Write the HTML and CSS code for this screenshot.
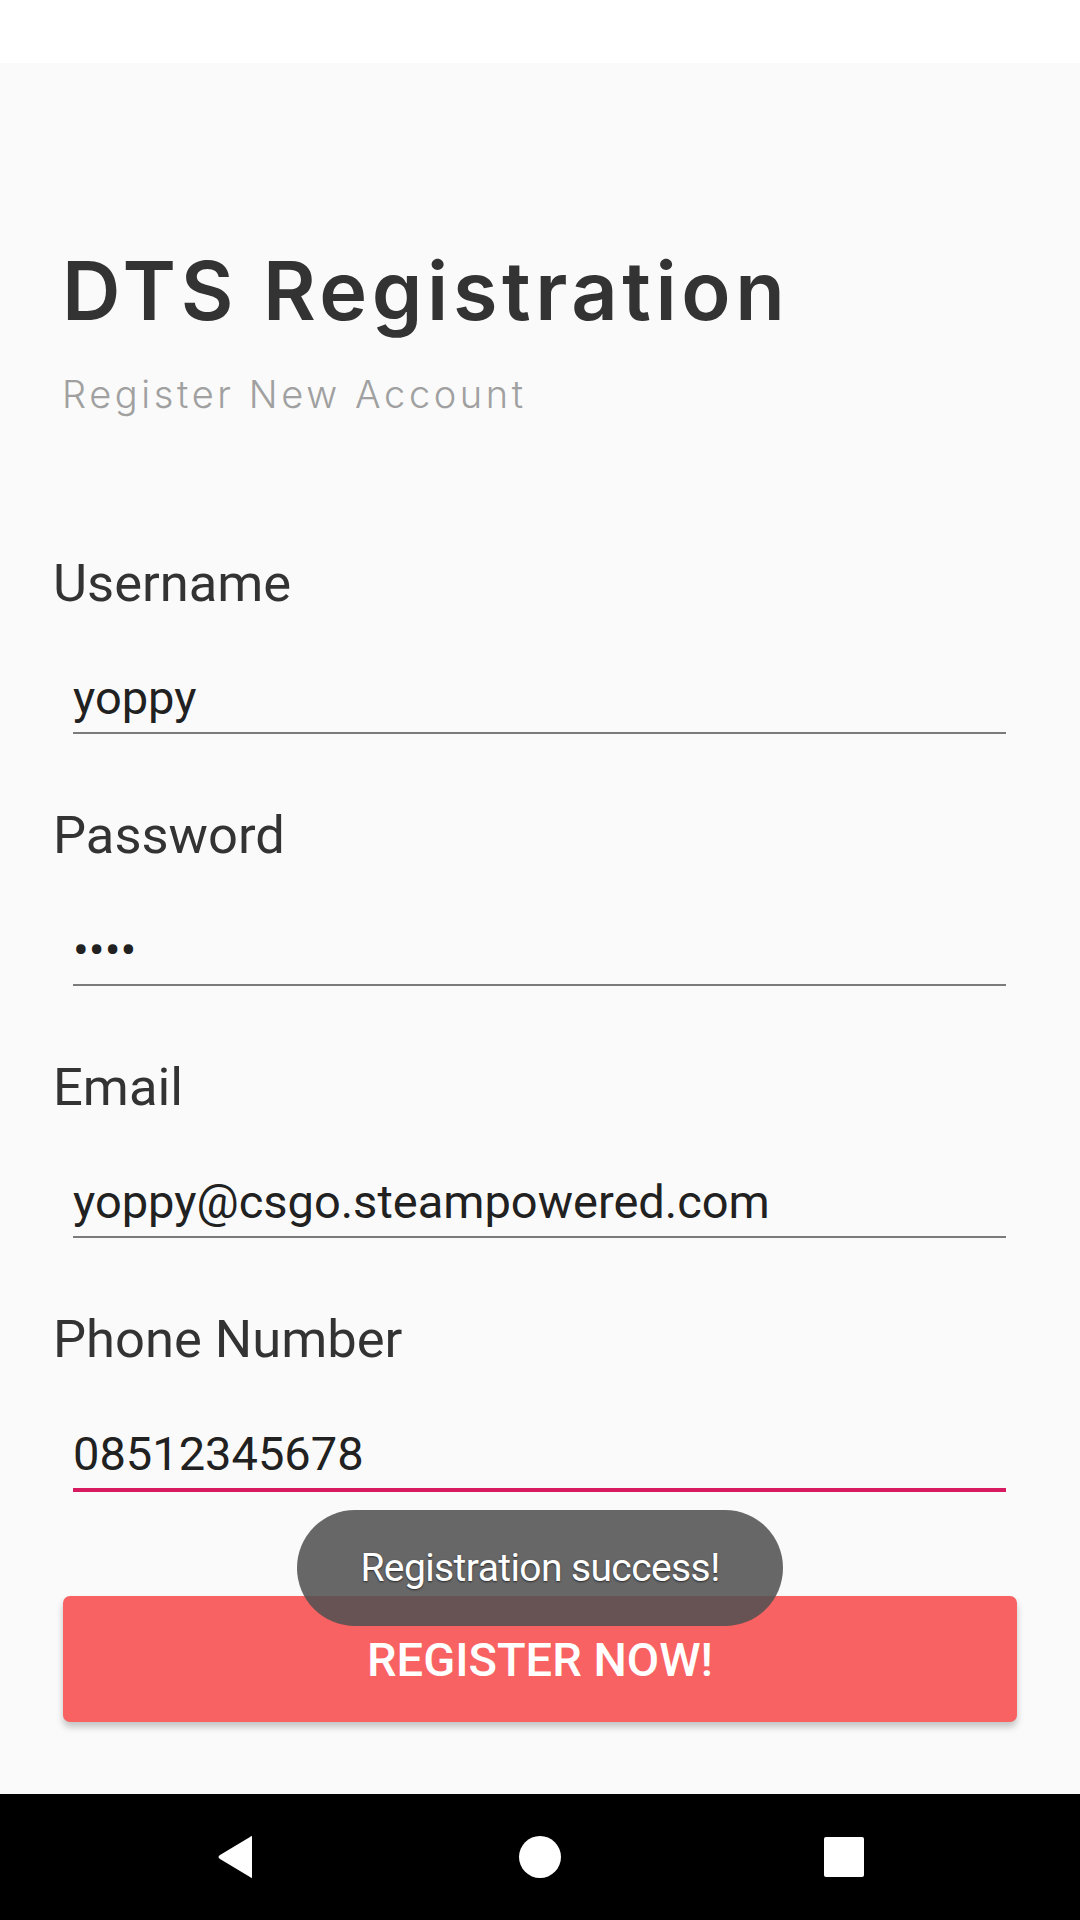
FILE: index.html
```html
<!DOCTYPE html>
<html>
<head>
<meta charset="utf-8">
<link rel="stylesheet" href="styles.css">
</head>
<body>
<div class="screen">
  <div class="statusbar"></div>
  <main class="main">
    <header class="header">
      <h1 class="title">DTS Registration</h1>
      <p class="subtitle">Register New Account</p>
    </header>
    <div class="form">
      <div class="field">
        <div class="label">Username</div>
        <div class="input">yoppy</div>
      </div>
      <div class="field">
        <div class="label">Password</div>
        <div class="input password">••••</div>
      </div>
      <div class="field">
        <div class="label">Email</div>
        <div class="input">yoppy@csgo.steampowered.com</div>
      </div>
      <div class="field">
        <div class="label">Phone Number</div>
        <div class="input focused">08512345678</div>
      </div>
    </div>
    <button class="register">REGISTER NOW!</button>
  </main>
  <nav class="navbar">
    <svg class="nav-icon" width="40" height="44" viewBox="0 0 40 44"><path d="M36 2 L36 42 Q36 44 34 42 L4 24 Q1 22 4 20 L34 2 Q36 0 36 2 Z" fill="#fff"/></svg>
    <svg class="nav-icon" width="44" height="44" viewBox="0 0 44 44"><circle cx="22" cy="22" r="21" fill="#fff"/></svg>
    <svg class="nav-icon" width="40" height="40" viewBox="0 0 40 40"><rect x="0" y="0" width="40" height="40" rx="2" fill="#fff"/></svg>
  </nav>
  <div class="toast">Registration success!</div>
</div>
</body>
</html>
```

FILE: styles.css
```css
html, body {
  margin: 0;
  padding: 0;
}
body {
  width: 1080px;
  height: 1920px;
  background: #fafafa;
  font-family: Roboto, "Liberation Sans", sans-serif;
}
.screen {
  position: relative;
  width: 1080px;
  height: 1920px;
  display: flex;
  flex-direction: column;
}
.statusbar {
  height: 63px;
  background: #ffffff;
}
.main {
  flex: 1;
  background: #fafafa;
  display: flex;
  flex-direction: column;
}
.header {
  padding: 188px 0 0 62px;
}
.title {
  margin: 0;
  font-family: Inter, "Open Sans", sans-serif;
  font-weight: 600;
  font-size: 81px;
  line-height: 81px;
  color: #333333;
  letter-spacing: 4.6px;
}
.subtitle {
  margin: 43px 0 0 0;
  font-family: Inter, "Open Sans", sans-serif;
  font-weight: 300;
  font-size: 38px;
  line-height: 38px;
  color: #a0a0a0;
  letter-spacing: 3.6px;
}
.form {
  padding: 139px 74px 0 53px;
  display: flex;
  flex-direction: column;
  gap: 70px;
}
.label {
  font-size: 52.5px;
  line-height: 63px;
  color: #333333;
}
.input {
  margin: 55px 0 0 20px;
  font-size: 47px;
  line-height: 56px;
  padding-bottom: 6px;
  color: #212121;
  border-bottom: 2px solid #7b7b7b;
}
.input.focused {
  border-bottom: 4px solid #d81b60;
}
.register {
  margin: 104px 63px 0 63px;
  height: 126px;
  border: none;
  border-radius: 7px;
  background: #f96262;
  color: #ffffff;
  font-family: Roboto, "Liberation Sans", sans-serif;
  font-weight: 500;
  font-size: 47px;
  box-shadow: 0 5px 7px rgba(0, 0, 0, 0.22);
  display: flex;
  align-items: center;
  justify-content: center;
  padding: 0;
}
.navbar {
  height: 126px;
  background: #000000;
  display: flex;
  align-items: center;
}
.nav-icon:nth-child(1) {
  margin-left: 216px;
}
.nav-icon:nth-child(2) {
  margin-left: 262px;
}
.nav-icon:nth-child(3) {
  margin-left: 262px;
}
.toast {
  position: absolute;
  top: 1510px;
  left: 297px;
  width: 486px;
  height: 116px;
  border-radius: 58px;
  background: rgba(80, 80, 80, 0.87);
  color: #ffffff;
  font-size: 39px;
  display: flex;
  align-items: center;
  justify-content: center;
  text-shadow: 0 1px 2px rgba(0, 0, 0, 0.6);
  letter-spacing: -0.6px;
}
```
